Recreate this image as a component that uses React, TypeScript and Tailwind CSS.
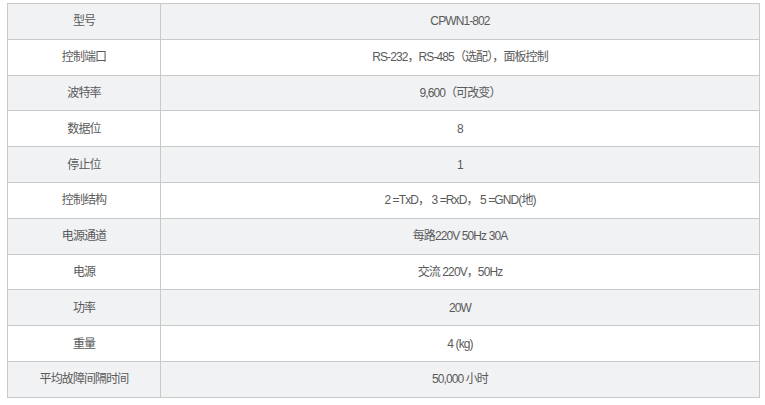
import React from 'react';

const rows: [string, string][] = [
  ['型号', 'CPWN1-802'],
  ['控制端口', 'RS-232，RS-485（选配），面板控制'],
  ['波特率', '9,600（可改变）'],
  ['数据位', '8'],
  ['停止位', '1'],
  ['控制结构', '2 =TxD， 3 =RxD， 5 =GND(地)'],
  ['电源通道', '每路220V 50Hz 30A'],
  ['电源', '交流 220V，50Hz'],
  ['功率', '20W'],
  ['重量', '4 (kg)'],
  ['平均故障间隔时间', '50,000 小时'],
];

export default function App() {
  return (
    <div className="w-[765px] h-[405px] bg-white pt-[3px] pl-[7px]">
      <table
        className="w-[753px] border-collapse text-[12px] text-[#5a5a5a] tracking-[-0.9px]"
        style={{ fontFamily: '"Liberation Sans", "Noto Sans CJK SC", sans-serif' }}
      >
        <tbody>
          {rows.map(([k, v], i) => (
            <tr key={k} className={i % 2 === 0 ? 'bg-[#f1f2f4]' : 'bg-white'}>
              <td className="w-[153px] h-[35.8px] border border-[#c9c9c9] text-center p-0">{k}</td>
              <td className="h-[35.8px] border border-[#c9c9c9] text-center p-0">{v}</td>
            </tr>
          ))}
        </tbody>
      </table>
    </div>
  );
}
